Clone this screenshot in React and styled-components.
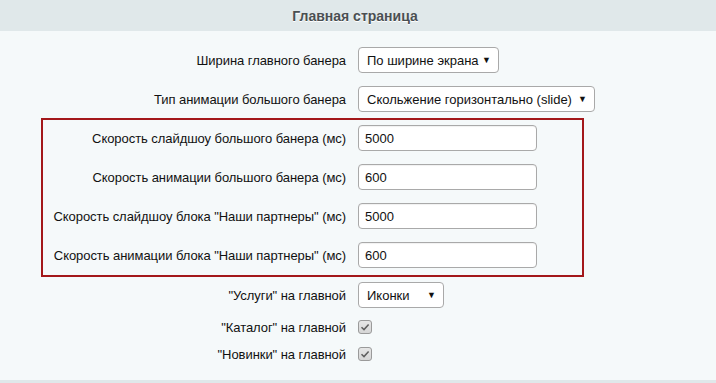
import React from "react";
import styled, { createGlobalStyle } from "styled-components";

const Global = createGlobalStyle`
  html, body { margin: 0; padding: 0; }
  body {
    background: #f5f9fa;
    font-family: "Liberation Sans", Arial, sans-serif;
    font-size: 13px;
    color: #000;
  }
`;

const Page = styled.div`
  width: 716px;
  height: 383px;
  display: flex;
  flex-direction: column;
  background: #f5f9fa;
  overflow: hidden;
`;

const Header = styled.div`
  height: 31px;
  flex: none;
  background: #e0e8ea;
  display: flex;
  align-items: center;
  justify-content: center;
  font-weight: bold;
  font-size: 14px;
  color: #4a4f52;
  text-shadow: 0 1px 0 #fff;
  padding-right: 6px;
`;

const Body = styled.div`
  flex: 1;
  padding-top: 16px;
  display: flex;
  flex-direction: column;
`;

const Footer = styled.div`
  height: 3px;
  flex: none;
  background: #e0e8ea;
`;

const Row = styled.div`
  display: grid;
  grid-template-columns: ${(p) => p.$labelWidth}px auto;
  column-gap: 12px;
  align-items: center;
  height: ${(p) => p.$h || 26}px;
  margin-top: ${(p) => p.$mt || 0}px;
`;

const Label = styled.div`
  text-align: right;
  white-space: nowrap;
  color: #111;
  letter-spacing: -0.06px;
`;

const Highlight = styled.div`
  margin: 6px 0 0 41px;
  width: 543px;
  box-sizing: border-box;
  border: 2px solid #a3171a;
  padding: 5px 0 7px 0;
  display: flex;
  flex-direction: column;
  gap: 13px;
`;

const Group = styled.div`
  display: flex;
  flex-direction: column;
  gap: 13px;
`;

const SelectBox = styled.div`
  width: ${(p) => p.$w}px;
  height: 26px;
  box-sizing: border-box;
  border: 1px solid #a9a9a9;
  border-radius: 4px;
  background: #fff;
  display: flex;
  align-items: center;
  justify-content: space-between;
  padding: 0 7px 0 8px;
  white-space: nowrap;
  color: #111;
`;

const Arrow = styled.span`
  font-size: 9px;
  color: #111;
`;

const TextInput = styled.input`
  width: 179px;
  height: 26px;
  box-sizing: border-box;
  border: 1px solid #a9a9a9;
  border-radius: 4px;
  background: #fff;
  padding: 0 6px;
  font-family: "Liberation Sans", Arial, sans-serif;
  font-size: 13px;
  color: #111;
  box-shadow: inset 0 1px 1px rgba(0,0,0,0.06);
  outline: none;
`;

const CheckBox = styled.span`
  width: 14px;
  height: 14px;
  box-sizing: border-box;
  border: 1px solid #9a9a9a;
  border-radius: 3px;
  background: linear-gradient(#e6e6e6, #d6d6d6);
  display: flex;
  align-items: center;
  justify-content: center;
`;

function Check() {
  return (
    <CheckBox>
      <svg width="10" height="10" viewBox="0 0 10 10">
        <path d="M1.5 5.2 L4 7.6 L8.6 2.4" fill="none" stroke="#5f5f5f" strokeWidth="1.5" />
      </svg>
    </CheckBox>
  );
}

function Select({ w, children }) {
  return (
    <SelectBox $w={w}>
      <span>{children}</span>
      <Arrow>▼</Arrow>
    </SelectBox>
  );
}

export default function App() {
  return (
    <>
      <Global />
      <Page>
        <Header>Главная страница</Header>
        <Body>
          <Group>
            <Row $labelWidth={346}>
              <Label>Ширина главного банера</Label>
              <Select w={141}>По ширине экрана</Select>
            </Row>
            <Row $labelWidth={346}>
              <Label>Тип анимации большого банера</Label>
              <Select w={237}>Скольжение горизонтально (slide)</Select>
            </Row>
          </Group>
          <Highlight>
            <Row $labelWidth={303}>
              <Label>Скорость слайдшоу большого банера (мс)</Label>
              <TextInput defaultValue="5000" />
            </Row>
            <Row $labelWidth={303}>
              <Label>Скорость анимации большого банера (мс)</Label>
              <TextInput defaultValue="600" />
            </Row>
            <Row $labelWidth={303}>
              <Label>Скорость слайдшоу блока "Наши партнеры" (мс)</Label>
              <TextInput defaultValue="5000" />
            </Row>
            <Row $labelWidth={303}>
              <Label>Скорость анимации блока "Наши партнеры" (мс)</Label>
              <TextInput defaultValue="600" />
            </Row>
          </Highlight>
          <Row $labelWidth={346} $mt={5}>
            <Label>"Услуги" на главной</Label>
            <Select w={86}>Иконки</Select>
          </Row>
          <Row $labelWidth={346} $h={20} $mt={9}>
            <Label>"Каталог" на главной</Label>
            <Check />
          </Row>
          <Row $labelWidth={346} $h={20} $mt={7}>
            <Label>"Новинки" на главной</Label>
            <Check />
          </Row>
        </Body>
        <Footer />
      </Page>
    </>
  );
}
